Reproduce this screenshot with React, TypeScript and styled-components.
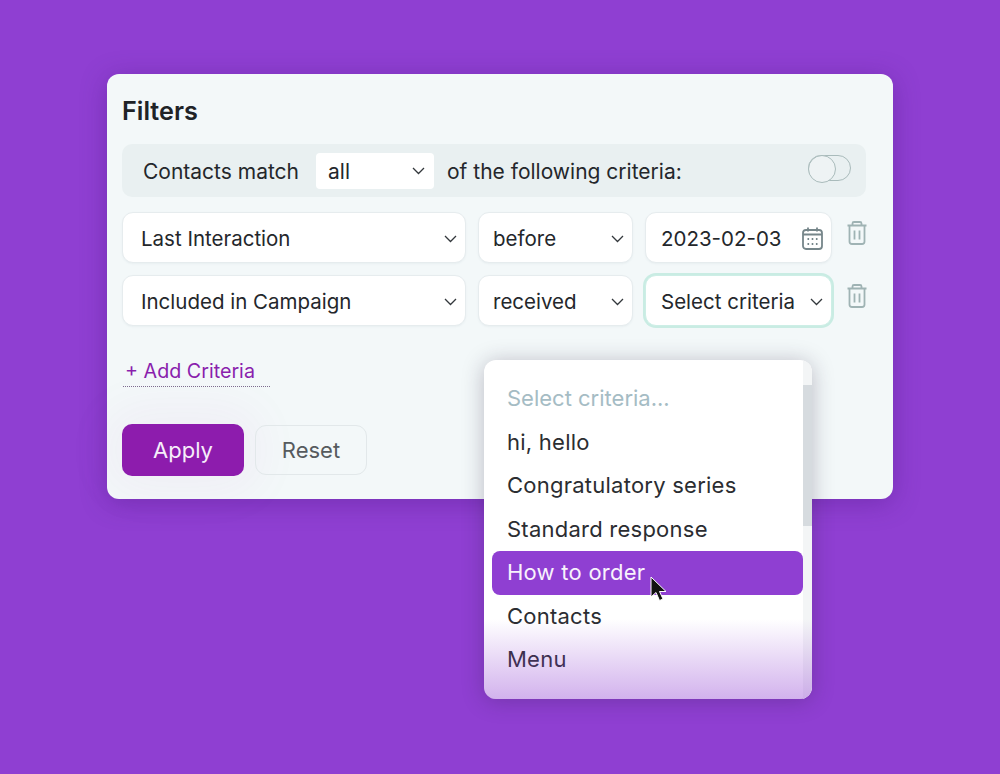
import styled, { createGlobalStyle } from "styled-components";

const GlobalStyle = createGlobalStyle`
  html, body {
    margin: 0;
    padding: 0;
    background: #8f3fd2;
  }
  * {
    box-sizing: border-box;
  }
`;

const Page = styled.div`
  width: 1000px;
  height: 774px;
  padding: 74px 107px 0;
  overflow: hidden;
  background: #8f3fd2;
  font-family: Inter, "Liberation Sans", sans-serif;
`;

const Card = styled.div`
  position: relative;
  width: 786px;
  height: 425px;
  padding: 21px 15px 0;
  border-radius: 12px;
  background: #f3f8f9;
  box-shadow: 0 4px 26px rgba(70, 20, 120, 0.35);
`;

const Title = styled.h1`
  margin: 0 0 17px;
  height: 32px;
  font-size: 25.2px;
  line-height: 32px;
  font-weight: 600;
  color: #202327;
`;

const MatchBar = styled.div`
  display: flex;
  align-items: center;
  width: 744px;
  height: 53px;
  padding: 1px 15px 0 21px;
  margin-bottom: 15px;
  border-radius: 10px;
  background: #e9f0f1;
  font-size: 21px;
  color: #24272b;
`;

const MatchSelect = styled.div`
  display: flex;
  align-items: center;
  justify-content: space-between;
  width: 118px;
  height: 36px;
  margin: -1px 13px 0 17px;
  padding: 1px 9px 0 12px;
  border-radius: 4px;
  background: #fff;
  color: #24272b;
`;

const Toggle = styled.div`
  position: relative;
  width: 43px;
  height: 26px;
  margin: -6px 0 0 auto;
  border: 1.5px solid #a9bbbb;
  border-radius: 13px;

  &::before {
    content: "";
    position: absolute;
    left: -1.5px;
    top: -1.5px;
    width: 26px;
    height: 26px;
    border: 1.5px solid #a9bbbb;
    border-radius: 50%;
    background: #eef3f4;
  }
`;

const Rows = styled.div`
  display: flex;
  flex-direction: column;
  gap: 12px;
`;

const Row = styled.div`
  display: grid;
  grid-template-columns: 344px 155px 187px 20px;
  column-gap: 12px;
  align-items: center;
  width: 744px;
  height: 51px;
`;

const Field = styled.div<{ $focused?: boolean; $left?: number; $right?: number }>`
  display: flex;
  align-items: center;
  justify-content: space-between;
  height: 51px;
  padding: 2px ${(p) => p.$right ?? 8}px 0 ${(p) => p.$left ?? 18}px;
  border: 1px solid ${(p) => (p.$focused ? "#cdeee6" : "#e6ecee")};
  border-radius: 11px;
  background: #fff;
  font-size: 20.5px;
  color: #24272b;
  box-shadow: ${(p) => (p.$focused ? "0 0 0 2px #c9ece3" : "0 1px 2px rgba(120, 140, 150, 0.08)")};
`;

const TrashButton = styled.div`
  display: flex;
  align-items: center;
  justify-content: center;
  width: 20px;
  height: 24px;
  margin: -9px 0 0 3px;
`;

const AddCriteria = styled.div`
  width: 147px;
  height: 28px;
  margin: 33px 0 37px 1px;
  padding-left: 2px;
  border-bottom: 1px dotted #7d6d8f;
  font-size: 19.7px;
  line-height: 25px;
  color: #8a1fad;
  white-space: nowrap;
`;

const Actions = styled.div`
  display: flex;
  align-items: center;
  gap: 11px;
`;

const ApplyButton = styled.button`
  width: 122px;
  height: 52px;
  border: 0;
  border-radius: 10px;
  background: #8d1cad;
  color: #f6eefa;
  font: 400 22px Inter, "Liberation Sans", sans-serif;
  box-shadow: 0 0 50px 14px rgba(170, 40, 180, 0.05);
`;

const ResetButton = styled.button`
  width: 112px;
  height: 50px;
  border: 1px solid #e2e8ea;
  border-radius: 11px;
  background: transparent;
  color: #565b5e;
  font: 400 22px Inter, "Liberation Sans", sans-serif;
`;

const Menu = styled.div`
  position: absolute;
  left: 377px;
  top: 286px;
  width: 328px;
  height: 339px;
  padding: 17px 9px 0 8px;
  overflow: hidden;
  border-radius: 12px;
  background: #fff;
  box-shadow: 0 2px 22px rgba(40, 30, 60, 0.28);
`;

const MenuItem = styled.div<{ $active?: boolean; $muted?: boolean }>`
  height: 43.5px;
  padding-left: 15px;
  border-radius: 8px;
  font-size: 22px;
  letter-spacing: ${(p) => (p.$muted ? 0 : 0.24)}px;
  line-height: 43.5px;
  white-space: nowrap;
  background: ${(p) => (p.$active ? "#8f3fd2" : "transparent")};
  color: ${(p) => (p.$active ? "#f8f2fc" : p.$muted ? "#a5bcc4" : "#2b2d31")};
`;

const ScrollTrack = styled.div`
  position: absolute;
  right: 0;
  top: 0;
  bottom: 0;
  width: 9px;
  background: #f3f5f6;
`;

const ScrollThumb = styled.div`
  width: 9px;
  height: 141px;
  margin-top: 25px;
  background: #d6dbdf;
`;

const MenuFade = styled.div`
  position: absolute;
  left: 0;
  right: 0;
  bottom: 0;
  height: 80px;
  background: linear-gradient(rgba(143, 63, 210, 0), rgba(143, 63, 210, 0.4));
  pointer-events: none;
`;

const Cursor = styled.svg`
  position: absolute;
  left: 166px;
  top: 216px;
`;

function Chevron() {
  return (
    <svg width="13" height="8" viewBox="0 0 13 8" fill="none">
      <path d="M1 1l5.500 5.500L12 1" stroke="#33383c" strokeWidth="1.3" />
    </svg>
  );
}

function CalendarIcon() {
  return (
    <svg width="21" height="23" viewBox="0 0 21 23" fill="none" stroke="#76868a" strokeWidth="1.8">
      <rect x="1" y="3" width="19" height="19" rx="3" />
      <path d="M6 0.500v4M15 0.500v4M1 7.500h19" />
      <path d="M5.500 12h1.600M9.700 12h1.600M13.900 12h1.600M5.500 17h1.600M9.700 17h1.600M13.900 17h1.600" strokeWidth="1.800" />
    </svg>
  );
}

function TrashIcon() {
  return (
    <svg width="20" height="24" viewBox="0 0 20 24" fill="none" stroke="#9fb3b4" strokeWidth="1.8">
      <path d="M0.500 4.500h19M5.500 4.500V2.500a1.500 1.500 0 0 1 1.500-1.500h6a1.500 1.500 0 0 1 1.500 1.500v2" />
      <path d="M2.500 4.500v16a2.500 2.500 0 0 0 2.500 2.500h10a2.500 2.500 0 0 0 2.500-2.500v-16" />
      <path d="M7.500 9.500v9M12.500 9.500v9" />
    </svg>
  );
}

function App() {
  return (
    <Page>
      <GlobalStyle />
      <Card>
        <Title>Filters</Title>
        <MatchBar>
          Contacts match
          <MatchSelect>
            all
            <Chevron />
          </MatchSelect>
          of the following criteria:
          <Toggle />
        </MatchBar>
        <Rows>
          <Row>
            <Field>
              Last Interaction
              <Chevron />
            </Field>
            <Field $left={14}>
              before
              <Chevron />
            </Field>
            <Field $left={15}>
              2023-02-03
              <CalendarIcon />
            </Field>
            <TrashButton>
              <TrashIcon />
            </TrashButton>
          </Row>
          <Row>
            <Field>
              Included in Campaign
              <Chevron />
            </Field>
            <Field $left={14}>
              received
              <Chevron />
            </Field>
            <Field $focused $left={15}>
              Select criteria
              <Chevron />
            </Field>
            <TrashButton>
              <TrashIcon />
            </TrashButton>
          </Row>
        </Rows>
        <AddCriteria>+ Add Criteria</AddCriteria>
        <Actions>
          <ApplyButton>Apply</ApplyButton>
          <ResetButton>Reset</ResetButton>
        </Actions>
        <Menu>
          <MenuItem $muted>Select criteria...</MenuItem>
          <MenuItem>hi, hello</MenuItem>
          <MenuItem>Congratulatory series</MenuItem>
          <MenuItem>Standard response</MenuItem>
          <MenuItem $active>How to order</MenuItem>
          <MenuItem>Contacts</MenuItem>
          <MenuItem>Menu</MenuItem>
          <ScrollTrack>
            <ScrollThumb />
          </ScrollTrack>
          <MenuFade />
          <Cursor width="17" height="26" viewBox="0 0 17 26">
            <path d="M1 1v20l5-4.500 3.500 8 3.500-1.500-3.500-7.500h6.500z" fill="#111" stroke="#fff" strokeWidth="1" />
          </Cursor>
        </Menu>
      </Card>
    </Page>
  );
}

export default App;
